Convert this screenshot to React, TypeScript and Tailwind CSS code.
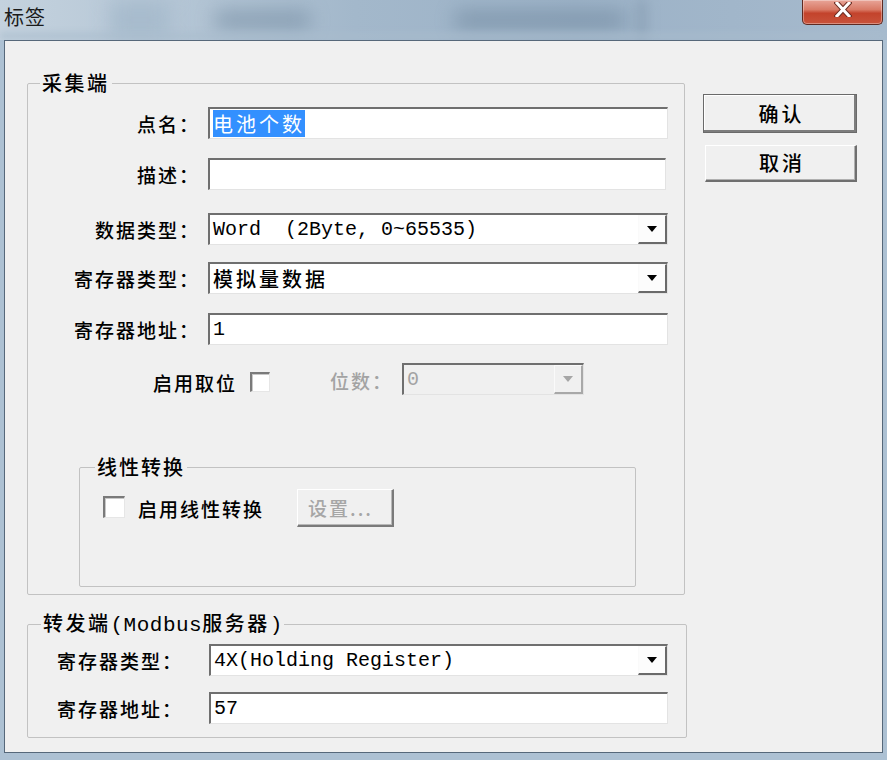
import React from "react";

function Sunken({ className = "", children }: { className?: string; children?: React.ReactNode }) {
  return (
    <div
      className={
        "flex items-center bg-white border-t-2 border-l-2 border-r border-b border-t-[#6f6f6f] border-l-[#6f6f6f] border-r-[#e3e3e3] border-b-[#e3e3e3] pl-[3px] overflow-hidden whitespace-nowrap " +
        className
      }
    >
      {children}
    </div>
  );
}

function Combo({
  className = "",
  children,
  disabled = false,
}: {
  className?: string;
  children?: React.ReactNode;
  disabled?: boolean;
}) {
  return (
    <div
      className={
        "flex items-stretch border-t-2 border-l-2 border-r border-b border-t-[#6f6f6f] border-l-[#6f6f6f] border-r-[#e3e3e3] border-b-[#e3e3e3] " +
        (disabled ? "bg-[#f0f0f0] " : "bg-white ") +
        className
      }
    >
      <div className="flex-1 flex items-center pl-[3px] overflow-hidden whitespace-nowrap">{children}</div>
      <div
        className={
          "w-[29px] flex items-center justify-center border-t border-l border-t-[#fafafa] border-l-[#fafafa] border-r-2 border-b-2 " +
          (disabled ? "bg-[#f0f0f0] border-r-[#a8a8a8] border-b-[#a8a8a8]" : "bg-[#fcfcfc] border-r-[#6a6a6a] border-b-[#6a6a6a]")
        }
      >
        <svg width="10" height="6" viewBox="0 0 10 6">
          <path d="M0 0H10L5 6Z" fill={disabled ? "#a6a6a6" : "#000"} />
        </svg>
      </div>
    </div>
  );
}

function CheckBox({ className = "" }: { className?: string }) {
  return (
    <div
      className={
        "bg-white border-t-2 border-l-2 border-r border-b border-t-[#7a7a7a] border-l-[#7a7a7a] border-r-[#e6e6e6] border-b-[#e6e6e6] shadow-[inset_1px_1px_0_#c8c8c8] " +
        className
      }
    />
  );
}

function Row({
  label,
  children,
  className = "",
}: {
  label: string;
  children: React.ReactNode;
  className?: string;
}) {
  return (
    <div className={"flex items-center " + className}>
      <div className="w-[180px] shrink-0 pr-[8px] text-right text-[19px] tracking-[2px] leading-none">{label}</div>
      {children}
    </div>
  );
}

function Row2({ label, children, className = "" }: { label: string; children: React.ReactNode; className?: string }) {
  return (
    <div className={"flex items-center " + className}>
      <div className="w-[181px] shrink-0 pl-[29px] text-left text-[19px] tracking-[2px] leading-none">{label}</div>
      {children}
    </div>
  );
}

export default function App() {
  return (
    <div className="w-[887px] h-[760px] flex flex-col bg-[#adc1d3] overflow-hidden font-['Noto_Sans_CJK_SC',sans-serif] font-medium text-black">
      {/* title bar */}
      <div className="relative h-[40px] shrink-0 overflow-hidden bg-[linear-gradient(90deg,#c4d2de_0%,#b6c7d6_18%,#a3b8cb_40%,#9cb2c7_65%,#a6bacd_100%)]">
        <div className="absolute left-[110px] top-[0px] w-[60px] h-[40px] bg-[#a7bbcd] blur-[10px]" />
        <div className="absolute left-[215px] top-[12px] w-[95px] h-[16px] bg-[#6a8299] opacity-60 blur-[10px]" />
        <div className="absolute left-[455px] top-[12px] w-[170px] h-[16px] bg-[#677f96] opacity-60 blur-[10px]" />
        <div className="absolute left-[636px] top-[0px] w-[12px] h-[40px] bg-[#8298ad] opacity-50 blur-[6px]" />
        <div className="absolute left-0 right-0 bottom-0 h-[8px] bg-[#a9bccd] opacity-60 blur-[3px]" />
        <div className="relative pl-[4px] pt-[6px] text-[20px] font-normal leading-[22px] tracking-[1px] text-[#1b1b1b]">标签</div>
        <div className="absolute left-[802px] top-0 w-[81px] h-[25px] rounded-b-[5px] border border-t-0 border-[#5e2a22] bg-[linear-gradient(180deg,#e8a598_0%,#d97a66_40%,#c3432c_55%,#c8533b_100%)] shadow-[inset_0_0_0_1px_rgba(255,255,255,0.35)] flex items-start justify-center pt-[2px]">
          <svg width="18" height="15" viewBox="0 0 18 15">
            <path d="M3 1L15 14M15 1L3 14" stroke="#6b2c22" strokeWidth="5" strokeLinecap="square" />
            <path d="M3 1L15 14M15 1L3 14" stroke="#ffffff" strokeWidth="3" strokeLinecap="square" />
          </svg>
        </div>
      </div>

      {/* body */}
      <div className="flex-1 flex px-[4px] pb-[7px]">
        <div className="flex-1 flex bg-[#f0f0f0] border border-[#56687a] pl-[22px]">
          {/* left column */}
          <div className="w-[660px] shrink-0 flex flex-col pt-[30px]">
            {/* 采集端 */}
            <fieldset className="w-[658px] border border-[#c2c2c2] rounded-[2px] m-0 p-0">
              <legend className="ml-[12px] px-[2px] text-[20px] leading-[24px] tracking-[2.5px]">采集端</legend>
              <div className="flex flex-col pt-[12px] pb-[7px] pr-[16px]">
                <Row label="点名：">
                  <Sunken className="flex-1 h-[32px]">
                    <span className="bg-[#3390ff] text-white text-[20px] font-normal tracking-[3px] leading-[27px]">电池个数</span>
                  </Sunken>
                </Row>
                <Row label="描述：" className="mt-[19px]">
                  <Sunken className="flex-1 h-[32px] mr-[2px]" />
                </Row>
                <Row label="数据类型：" className="mt-[23px]">
                  <Combo className="flex-1 h-[32px]">
                    <span className="font-['Liberation_Mono',monospace] font-normal text-[20px] leading-none whitespace-pre">
                      {"Word  (2Byte, 0~65535)"}
                    </span>
                  </Combo>
                </Row>
                <Row label="寄存器类型：" className="mt-[17px]">
                  <Combo className="flex-1 h-[32px]">
                    <span className="text-[20px] tracking-[3px] leading-none">模拟量数据</span>
                  </Combo>
                </Row>
                <Row label="寄存器地址：" className="mt-[19px]">
                  <Sunken className="flex-1 h-[32px]">
                    <span className="font-['Liberation_Mono',monospace] font-normal text-[20px] leading-none">1</span>
                  </Sunken>
                </Row>
                <div className="mt-[18px] flex items-center pl-[125px]">
                  <span className="mt-[6px] text-[19px] tracking-[2px] leading-none">启用取位</span>
                  <CheckBox className="mt-[6px] ml-[13px] w-[20px] h-[20px]" />
                  <span className="mt-[2px] ml-[60px] text-[19px] tracking-[2px] leading-none text-[#a3a3a3]">位数：</span>
                  <Combo disabled className="ml-[9px] w-[182px] h-[32px]">
                    <span className="font-['Liberation_Mono',monospace] font-normal text-[20px] leading-none text-[#a3a3a3]">0</span>
                  </Combo>
                </div>

                {/* 线性转换 */}
                <fieldset className="mt-[60px] ml-[51px] w-[557px] border border-[#c2c2c2] rounded-[2px] m-0 p-0">
                  <legend className="ml-[15px] px-[2px] text-[20px] leading-[24px] tracking-[2px]">线性转换</legend>
                  <div className="flex items-center pt-[10px] pb-[59px] pl-[23px]">
                    <CheckBox className="w-[22px] h-[22px] mb-[3px]" />
                    <span className="ml-[13px] text-[19px] tracking-[2px] leading-none">启用线性转换</span>
                    <div className="ml-[33px] w-[97px] h-[38px] flex items-center pl-[10px] bg-[#f0f0f0] border-t border-l border-t-white border-l-white border-r-2 border-b-2 border-r-[#7a7a7a] border-b-[#7a7a7a] shadow-[inset_-1px_-1px_0_#b8b8b8]">
                      <span className="text-[19px] tracking-[2px] leading-none text-[#a6a6a6]">设置...</span>
                    </div>
                  </div>
                </fieldset>
              </div>
            </fieldset>

            {/* 转发端 */}
            <fieldset className="mt-[16px] w-[660px] border border-[#c2c2c2] rounded-[2px] m-0 p-0">
              <legend className="ml-[13px] px-[2px] text-[20px] leading-[24px] tracking-[2.5px] whitespace-nowrap">
                转发端<span className="font-['Liberation_Mono',monospace] font-normal text-[21px] tracking-[0.5px]">(Modbus</span>服务器
                <span className="font-['Liberation_Mono',monospace] font-normal text-[21px] tracking-normal">)</span>
              </legend>
              <div className="flex flex-col pt-[6px] pb-[13px] pr-[18px]">
                <Row2 label="寄存器类型：">
                  <Combo className="flex-1 h-[32px]">
                    <span className="font-['Liberation_Mono',monospace] font-normal text-[20px] leading-none whitespace-pre">
                      4X(Holding Register)
                    </span>
                  </Combo>
                </Row2>
                <Row2 label="寄存器地址：" className="mt-[16px]">
                  <Sunken className="flex-1 h-[32px]">
                    <span className="font-['Liberation_Mono',monospace] font-normal text-[20px] leading-none">57</span>
                  </Sunken>
                </Row2>
              </div>
            </fieldset>
          </div>

          {/* right column */}
          <div className="ml-[16px] pt-[53px] flex flex-col">
            <div className="w-[154px] h-[39px] flex items-center justify-center bg-[#f0f0f0] border border-[#6a6a6a] shadow-[inset_-2px_-2px_0_#7d7d7d,inset_1px_1px_0_#ffffff]">
              <span className="text-[20px] tracking-[3px] leading-none pl-[3px]">确认</span>
            </div>
            <div className="mt-[12px] ml-[2px] w-[152px] h-[37px] flex items-center justify-center bg-[#f0f0f0] border-t border-l border-t-white border-l-white border-r-2 border-b-2 border-r-[#6f6f6f] border-b-[#6f6f6f] shadow-[inset_-1px_-1px_0_#b0b0b0]">
              <span className="text-[20px] tracking-[3px] leading-none pl-[3px]">取消</span>
            </div>
          </div>
        </div>
      </div>
    </div>
  );
}
